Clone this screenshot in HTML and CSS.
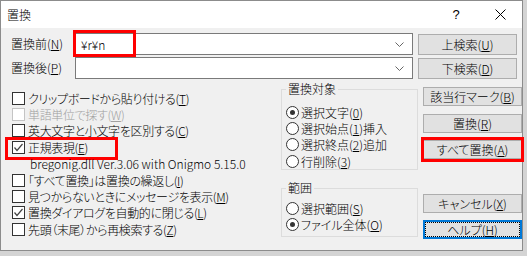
FILE: index.html
```html
<!DOCTYPE html>
<html lang="ja">
<head>
<meta charset="utf-8">
<link rel="stylesheet" href="styles.css">
</head>
<body>
<div class="window">
  <div class="titlebar">
    <span class="title">置換</span>
    <span class="tb-btn">?</span>
    <span class="tb-btn"><svg width="11" height="11" viewBox="0 0 11 11"><path d="M0.5,0.5 L10.5,10.5 M10.5,0.5 L0.5,10.5" stroke="#000" stroke-width="1" fill="none"/></svg></span>
  </div>
  <div class="content">
    <div class="top">
      <span class="lbl">置換前(<u>N</u>)</span>
      <div class="combo"><span class="val">¥r¥n</span><svg class="chev" width="9" height="5" viewBox="0 0 9 5"><polyline points="0.5,0.5 4.5,4.5 8.5,0.5" fill="none" stroke="#666"/></svg><div class="mark mark-input"></div></div>
      <div class="btn">上検索(<u>U</u>)</div>
      <span class="lbl">置換後(<u>P</u>)</span>
      <div class="combo"><span class="val"></span><svg class="chev" width="9" height="5" viewBox="0 0 9 5"><polyline points="0.5,0.5 4.5,4.5 8.5,0.5" fill="none" stroke="#666"/></svg></div>
      <div class="btn">下検索(<u>D</u>)</div>
    </div>
    <div class="lower">
      <div class="checks">
        <div class="row"><span class="cb"></span>クリップボードから貼り付ける(<u>T</u>)</div>
        <div class="row disabled"><span class="cb"></span>単語単位で探す(<u>W</u>)</div>
        <div class="row"><span class="cb"></span>英大文字と小文字を区別する(<u>C</u>)</div>
        <div class="row marked"><span class="cb"><svg width="11" height="11" viewBox="0 0 11 11"><polyline points="1.5,5.5 4,8.5 9.5,2" fill="none" stroke="#444" stroke-width="1.2"/></svg></span>正規表現(<u>E</u>)<div class="mark mark-regex"></div></div>
        <div class="row info">bregonig.dll Ver.3.06 with Onigmo 5.15.0</div>
        <div class="row"><span class="cb"></span>「すべて置換」は置換の繰返し(<u>I</u>)</div>
        <div class="row"><span class="cb"></span>見つからないときにメッセージを表示(<u>M</u>)</div>
        <div class="row"><span class="cb"><svg width="11" height="11" viewBox="0 0 11 11"><polyline points="1.5,5.5 4,8.5 9.5,2" fill="none" stroke="#444" stroke-width="1.2"/></svg></span>置換ダイアログを自動的に閉じる(<u>L</u>)</div>
        <div class="row"><span class="cb"></span>先頭（末尾）から再検索する(<u>Z</u>)</div>
      </div>
      <div class="groups">
        <fieldset class="grp grp1">
          <legend>置換対象</legend>
          <div class="row"><span class="rb on"></span>選択文字(<u>0</u>)</div>
          <div class="row"><span class="rb"></span>選択始点(<u>1</u>)挿入</div>
          <div class="row"><span class="rb"></span>選択終点(<u>2</u>)追加</div>
          <div class="row"><span class="rb"></span>行削除(<u>3</u>)</div>
        </fieldset>
        <fieldset class="grp grp2">
          <legend>範囲</legend>
          <div class="row"><span class="rb"></span>選択範囲(<u>S</u>)</div>
          <div class="row"><span class="rb on"></span>ファイル全体(<u>O</u>)</div>
        </fieldset>
      </div>
      <div class="buttons">
        <div class="btn b-mark">該当行マーク(<u>B</u>)</div>
        <div class="btn b-rep">置換(<u>R</u>)</div>
        <div class="btn b-all">すべて置換(<u>A</u>)<div class="mark mark-all"></div></div>
        <div class="btn b-cancel">キャンセル(<u>X</u>)</div>
        <div class="btn b-help focus"><span class="focusrect">ヘルプ(<u>H</u>)</span></div>
      </div>
    </div>
  </div>
</div>
</body>
</html>
```

FILE: styles.css
```css
* { box-sizing: border-box; }
html, body { margin: 0; padding: 0; }
body {
  width: 527px;
  height: 256px;
  overflow: hidden;
  background: #d4d4d4;
  font-family: "Noto Sans CJK JP", sans-serif;
  font-weight: 300;
  font-size: 12px;
  color: #000;
  font-feature-settings: "palt";
}
u { text-decoration: underline; text-underline-offset: 1px; }
.window {
  width: 523px;
  height: 251px;
  border: 1px solid #8c8c8c;
  background: #f0f0f0;
  display: flex;
  flex-direction: column;
}
.titlebar {
  height: 27px;
  background: #fff;
  display: flex;
  align-items: center;
  padding-left: 6px;
  flex: none;
}
.title { flex: 1; }
.tb-btn {
  width: 44px;
  height: 27px;
  display: flex;
  align-items: center;
  justify-content: center;
  font-family: "Liberation Sans", sans-serif;
  font-size: 13px;
}
.content { padding: 5px 4px 0 10px; }
.top {
  display: grid;
  grid-template-columns: 59px 338px 99px;
  grid-auto-rows: 22px;
  column-gap: 5px;
  row-gap: 2px;
  align-items: center;
}
.lbl { line-height: 22px; white-space: nowrap; }
.combo {
  position: relative;
  height: 22px;
  border: 1px solid #7a7a7a;
  background: #fff;
  display: flex;
  align-items: center;
  padding: 0 8px 0 5px;
}
.combo .val { flex: 1; }
.btn {
  position: relative;
  height: 21px;
  background: #e1e1e1;
  border: 1px solid #adadad;
  display: flex;
  align-items: center;
  justify-content: center;
}
.mark {
  position: absolute;
  border: 3px solid #f00;
  pointer-events: none;
}
.mark-input { left: -3px; top: -4px; width: 63px; height: 27px; }
.mark-regex { left: -7px; top: -2px; width: 113px; height: 23px; }
.mark-all { left: -3px; top: -4px; width: 103px; height: 25px; }

.lower {
  margin-top: 3px;
  display: grid;
  grid-template-columns: 265px 137px 99px;
  column-gap: 5px;
  align-items: start;
}
.checks { padding: 8px 0 0 1px; letter-spacing: -0.35px; }
.row {
  position: relative;
  height: 16.4px;
  display: flex;
  align-items: center;
  white-space: nowrap;
}
.cb {
  width: 13px;
  height: 13px;
  border: 1px solid #333;
  background: #fff;
  margin-right: 3px;
  flex: none;
  display: flex;
  align-items: center;
  justify-content: center;
}
.disabled { color: #a0a0a0; }
.disabled .cb { border-color: #c4c4c4; }
.info { padding-left: 18px; letter-spacing: 0; }

.grp {
  margin: 0;
  border: 1px solid #dcdcdc;
  padding: 8px 0 0 4px;
}
.grp legend {
  padding: 0 2px;
  line-height: 14px;
}
.grp1 { height: 88px; }
.grp2 { margin-top: 11px; padding-top: 5px; height: 56px; }
.rb {
  width: 13px;
  height: 13px;
  border: 1px solid #333;
  border-radius: 50%;
  background: #fff;
  margin-right: 2px;
  flex: none;
  display: flex;
  align-items: center;
  justify-content: center;
}
.rb.on::after {
  content: "";
  width: 5px;
  height: 5px;
  border-radius: 50%;
  background: #333;
}
.buttons { display: flex; flex-direction: column; }
.buttons .btn { height: 19px; }
.b-mark { margin-top: 5px; }
.b-rep { margin-top: 8px; }
.b-all { margin-top: 7px; }
.b-cancel { margin-top: 35px; }
.b-help { margin-top: 7px; }
.focus { border: 2px solid #0078d7; }
.focusrect {
  display: flex;
  align-items: center;
  justify-content: center;
  width: calc(100% - 2px);
  height: calc(100% - 2px);
  outline: 1px dotted #000;
}
```
